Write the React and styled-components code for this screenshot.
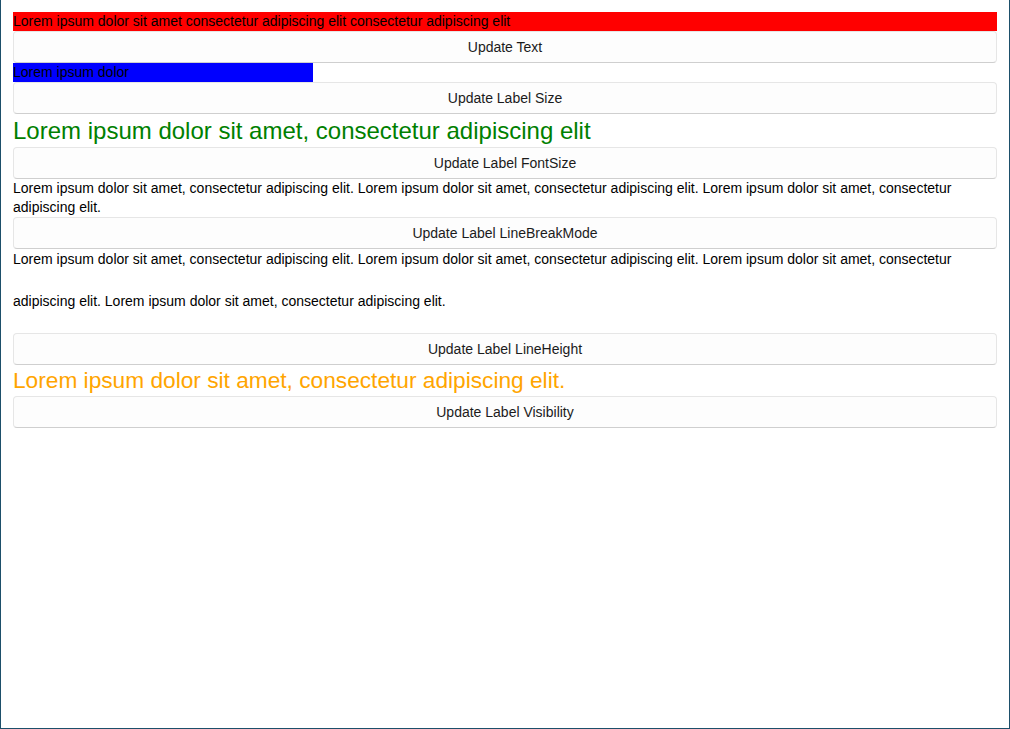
import React from "react";
import styled, { createGlobalStyle } from "styled-components";

const GlobalStyle = createGlobalStyle`
  html, body {
    margin: 0;
    padding: 0;
    background: #ffffff;
  }
  body {
    font-family: "Liberation Sans", Arial, sans-serif;
  }
`;

const longText =
  "Lorem ipsum dolor sit amet, consectetur adipiscing elit. Lorem ipsum dolor sit amet, consectetur adipiscing elit. Lorem ipsum dolor sit amet, consectetur adipiscing elit.";

export default function App() {
  return (
    <>
      <GlobalStyle />
      <Window>
        <Stack>
          <Label bg="#ff0000">
            Lorem ipsum dolor sit amet consectetur adipiscing elit consectetur adipiscing elit
          </Label>
          <Button>Update Text</Button>
          <Label bg="#0000ff" width="300px">
            Lorem ipsum dolor
          </Label>
          <Button>Update Label Size</Button>
          <BigLabel color="#008000" size="24px" lh="33px">
            Lorem ipsum dolor sit amet, consectetur adipiscing elit
          </BigLabel>
          <Button>Update Label FontSize</Button>
          <Label>{longText}</Label>
          <Button>Update Label LineBreakMode</Button>
          <TallLines>
            <TopAligned>
              {longText} Lorem ipsum dolor sit amet, consectetur adipiscing elit.
            </TopAligned>
          </TallLines>
          <Button>Update Label LineHeight</Button>
          <BigLabel color="#ffa500" size="22.7px" lh="31px">
            Lorem ipsum dolor sit amet, consectetur adipiscing elit.
          </BigLabel>
          <Button>Update Label Visibility</Button>
        </Stack>
      </Window>
    </>
  );
}

const Window = styled.div`
  box-sizing: border-box;
  height: 729px;
  border: 1px solid #1d4f6a;
  border-top: none;
  padding: 12px 12px 0 12px;
  background: #ffffff;
`;

const Stack = styled.div`
  display: flex;
  flex-direction: column;
  align-items: stretch;
`;

const Label = styled.div`
  font-size: 14px;
  line-height: 19px;
  color: #000000;
  background: ${(p) => p.bg || "transparent"};
  width: ${(p) => p.width || "auto"};
`;

const BigLabel = styled.div`
  font-size: ${(p) => p.size};
  line-height: ${(p) => p.lh};
  color: ${(p) => p.color};
`;

const TallLines = styled.div`
  height: 84px;
  overflow: hidden;
  font-size: 14px;
  line-height: 42px;
  color: #000000;
`;

const TopAligned = styled.span`
  line-height: 20px;
  vertical-align: top;
`;

const Button = styled.button`
  box-sizing: border-box;
  height: 32px;
  width: 100%;
  margin: 0;
  padding: 0 12px;
  background: #fdfdfd;
  border: 1px solid #e6e6e6;
  border-bottom-color: #cfcfcf;
  border-radius: 4px;
  font-family: "Liberation Sans", Arial, sans-serif;
  font-size: 14px;
  color: #1b1b1b;
  cursor: pointer;
  text-align: center;

  &:hover {
    background: #f6f6f6;
  }
`;
